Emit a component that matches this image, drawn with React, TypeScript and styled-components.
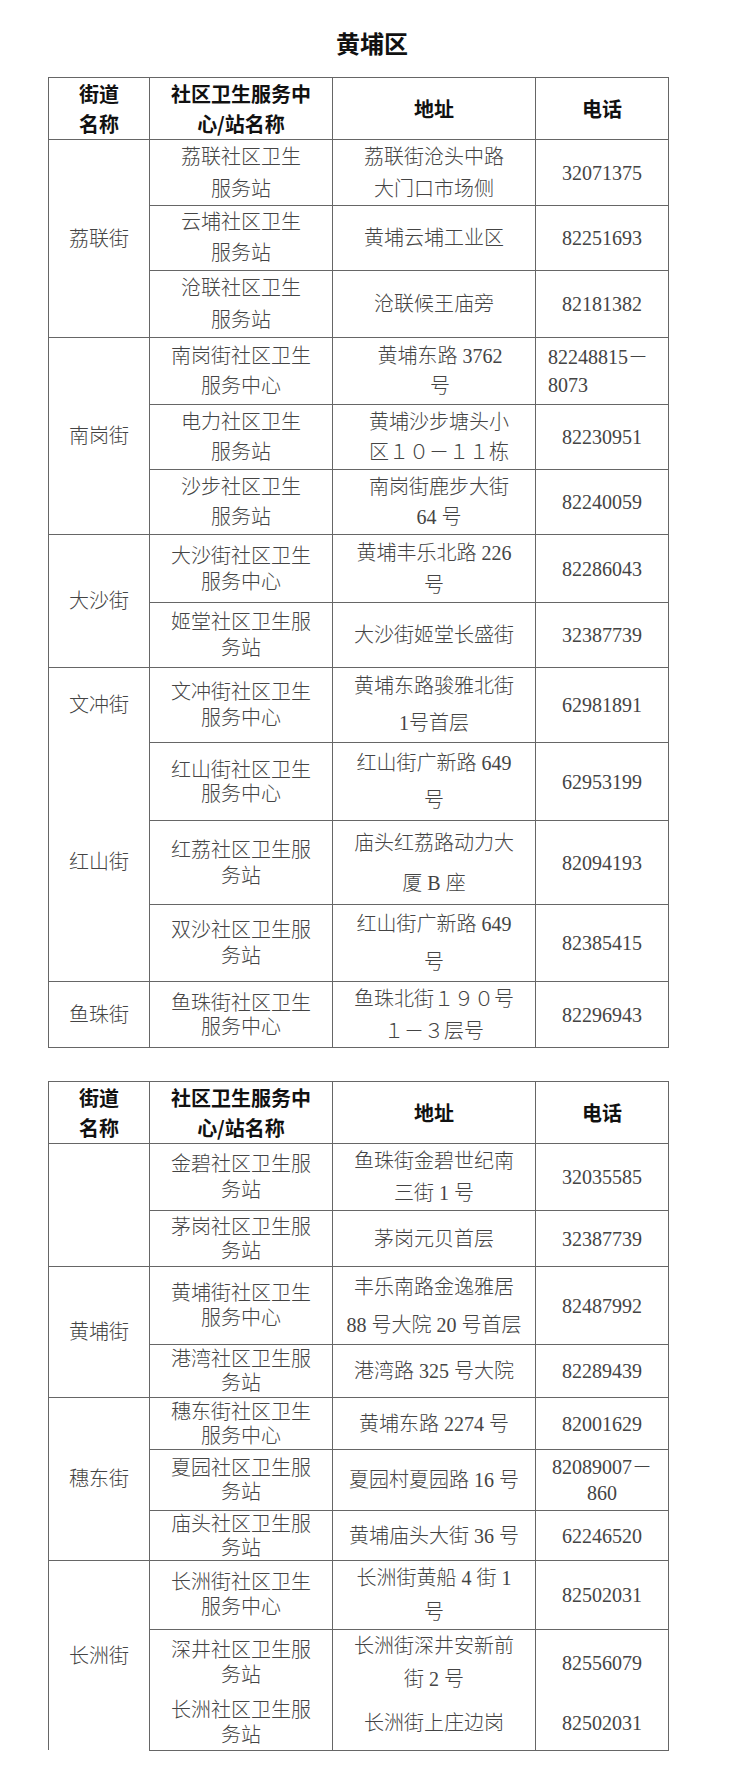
import React from 'react'
import styled, { createGlobalStyle } from 'styled-components'

const GlobalStyle = createGlobalStyle`
    body {
        margin: 0;
        background: #fff;
    }
`

interface ICell {
    lines: string[]
    lh?: number
    align?: 'left' | 'center'
    shift?: number
}

interface IStreet {
    text: string
    span: number
    open?: boolean
}

interface IRow {
    height: number
    street?: IStreet
    station: ICell
    address: ICell
    phone: ICell
    open?: boolean
}

const c = (lines: string | string[], lh = 32, extra: Partial<ICell> = {}): ICell => ({
    lines: Array.isArray(lines) ? lines : [lines],
    lh,
    ...extra,
})

const tableOne: IRow[] = [
    { height: 66, street: { text: '荔联街', span: 3 }, station: c(['荔联社区卫生', '服务站'], 32), address: c(['荔联街沧头中路', '大门口市场侧'], 32), phone: c('32071375') },
    { height: 65, station: c(['云埔社区卫生', '服务站'], 31), address: c('黄埔云埔工业区'), phone: c('82251693') },
    { height: 67, station: c(['沧联社区卫生', '服务站'], 32), address: c('沧联候王庙旁'), phone: c('82181382') },
    { height: 67, street: { text: '南岗街', span: 3 }, station: c(['南岗街社区卫生', '服务中心'], 30), address: c(['黄埔东路 3762', '号'], 30, { shift: 12 }), phone: c(['82248815－', '8073'], 28, { align: 'left' }) },
    { height: 65, station: c(['电力社区卫生', '服务站'], 30), address: c(['黄埔沙步塘头小', '区１０－１１栋'], 30, { shift: 10 }), phone: c('82230951') },
    { height: 65, station: c(['沙步社区卫生', '服务站'], 30), address: c(['南岗街鹿步大街', '64 号'], 30, { shift: 10 }), phone: c('82240059') },
    { height: 68, street: { text: '大沙街', span: 2 }, station: c(['大沙街社区卫生', '服务中心'], 26), address: c(['黄埔丰乐北路 226', '号'], 32), phone: c('82286043') },
    { height: 65, station: c(['姬堂社区卫生服', '务站'], 26), address: c('大沙街姬堂长盛街'), phone: c('32387739') },
    { height: 75, street: { text: '文冲街', span: 1, open: true }, station: c(['文冲街社区卫生', '服务中心'], 26), address: c(['黄埔东路骏雅北街', '1号首层'], 37), phone: c('62981891') },
    { height: 78, street: { text: '红山街', span: 3 }, station: c(['红山街社区卫生', '服务中心'], 24), address: c(['红山街广新路 649', '号'], 37), phone: c('62953199') },
    { height: 84, station: c(['红荔社区卫生服', '务站'], 26), address: c(['庙头红荔路动力大', '厦 B 座'], 40), phone: c('82094193') },
    { height: 74, station: c(['双沙社区卫生服', '务站'], 26), address: c(['红山街广新路 649', '号'], 38), phone: c('82385415') },
    { height: 66, street: { text: '鱼珠街', span: 1 }, station: c(['鱼珠街社区卫生', '服务中心'], 24), address: c(['鱼珠北街１９０号', '１－３层号'], 32), phone: c('82296943') },
]

const tableTwo: IRow[] = [
    { height: 67, street: { text: '', span: 2 }, station: c(['金碧社区卫生服', '务站'], 26), address: c(['鱼珠街金碧世纪南', '三街 1 号'], 32), phone: c('32035585') },
    { height: 56, station: c(['茅岗社区卫生服', '务站'], 24), address: c('茅岗元贝首层'), phone: c('32387739') },
    { height: 78, street: { text: '黄埔街', span: 2 }, station: c(['黄埔街社区卫生', '服务中心'], 25), address: c(['丰乐南路金逸雅居', '88 号大院 20 号首层'], 38), phone: c('82487992') },
    { height: 53, station: c(['港湾社区卫生服', '务站'], 24), address: c('港湾路 325 号大院'), phone: c('82289439') },
    { height: 52, street: { text: '穗东街', span: 3 }, station: c(['穗东街社区卫生', '服务中心'], 24), address: c('黄埔东路 2274 号'), phone: c('82001629') },
    { height: 61, station: c(['夏园社区卫生服', '务站'], 24), address: c('夏园村夏园路 16 号'), phone: c(['82089007－', '860'], 26) },
    { height: 50, station: c(['庙头社区卫生服', '务站'], 24), address: c('黄埔庙头大街 36 号'), phone: c('62246520') },
    { height: 65, street: { text: '长洲街', span: 3, open: true }, station: c(['长洲街社区卫生', '服务中心'], 25), address: c(['长洲街黄船 4 街 1', '号'], 34), phone: c('82502031') },
    { height: 62, open: true, station: c(['深井社区卫生服', '务站'], 25), address: c(['长洲街深井安新前', '街 2 号'], 33), phone: c('82556079') },
    { height: 54, station: c(['长洲社区卫生服', '务站'], 25), address: c('长洲街上庄边岗'), phone: c('82502031') },
]

const Page = styled.div`
    width: 744px;
    padding: 28px 0 24px;
    font-family: "Liberation Serif", "Noto Sans CJK SC", serif;
`

const Title = styled.h1`
    margin: 0 0 19px;
    font-family: "Noto Sans CJK SC", sans-serif;
    font-size: 24px;
    line-height: 30px;
    font-weight: 700;
    text-align: center;
    color: #111;
`

const Table = styled.table<{ $gap?: number }>`
    margin: ${p => p.$gap || 0}px 0 0 48px;
    width: 620px;
    border-collapse: collapse;
    table-layout: fixed;
`

const HeadCell = styled.th<{ $dark?: boolean }>`
    height: 61px;
    padding: 0;
    border: 1px solid #666;
    ${p => p.$dark && 'border-left-color: #111;'}
    font-family: "Noto Sans CJK SC", sans-serif;
    font-size: 20px;
    line-height: 30px;
    font-weight: 700;
    color: #111;
    text-align: center;
    vertical-align: middle;
`

const Cell = styled.td<{ $lh: number; $align?: string; $shift?: number; $open?: boolean; $dark?: boolean }>`
    padding: 0 0 0 ${p => p.$shift || 0}px;
    border: 1px solid #666;
    ${p => p.$dark && 'border-left-color: #111;'}
    ${p => p.$open && 'border-bottom-style: hidden;'}
    font-family: "Liberation Serif", "Noto Sans CJK SC", serif;
    font-size: 20px;
    line-height: ${p => p.$lh}px;
    font-weight: 300;
    color: #444;
    text-align: ${p => p.$align || 'center'};
    vertical-align: middle;
    white-space: nowrap;
`

const Line = styled.div<{ $align?: string }>`
    padding-left: ${p => (p.$align === 'left' ? 12 : 0)}px;
`

const Lines = ({ cell }: { cell: ICell }) => (
    <>
        {cell.lines.map((l, i) => (
            <Line key={i} $align={cell.align}>{l}</Line>
        ))}
    </>
)

const TableBlock = ({ rows, gap }: { rows: IRow[]; gap?: number }) => (
    <Table $gap={gap}>
        <colgroup>
            <col style={{ width: 101 }} />
            <col style={{ width: 183 }} />
            <col style={{ width: 203 }} />
            <col style={{ width: 133 }} />
        </colgroup>
        <thead>
            <tr>
                <HeadCell>街道<br />名称</HeadCell>
                <HeadCell>社区卫生服务中<br />心/站名称</HeadCell>
                <HeadCell $dark>地址</HeadCell>
                <HeadCell>电话</HeadCell>
            </tr>
        </thead>
        <tbody>
            {rows.map((row, i) => (
                <tr key={i} style={{ height: row.height }}>
                    {row.street && (
                        <Cell $lh={30} rowSpan={row.street.span} $open={row.street.open}>
                            {row.street.text}
                        </Cell>
                    )}
                    <Cell $lh={row.station.lh || 32} $open={row.open}>
                        <Lines cell={row.station} />
                    </Cell>
                    <Cell $lh={row.address.lh || 32} $shift={row.address.shift} $open={row.open} $dark>
                        <Lines cell={row.address} />
                    </Cell>
                    <Cell $lh={row.phone.lh || 32} $align={row.phone.align} $open={row.open}>
                        <Lines cell={row.phone} />
                    </Cell>
                </tr>
            ))}
        </tbody>
    </Table>
)

export default function App() {
    return (
        <Page>
            <GlobalStyle />
            <Title>黄埔区</Title>
            <TableBlock rows={tableOne} />
            <TableBlock rows={tableTwo} gap={33} />
        </Page>
    )
}
